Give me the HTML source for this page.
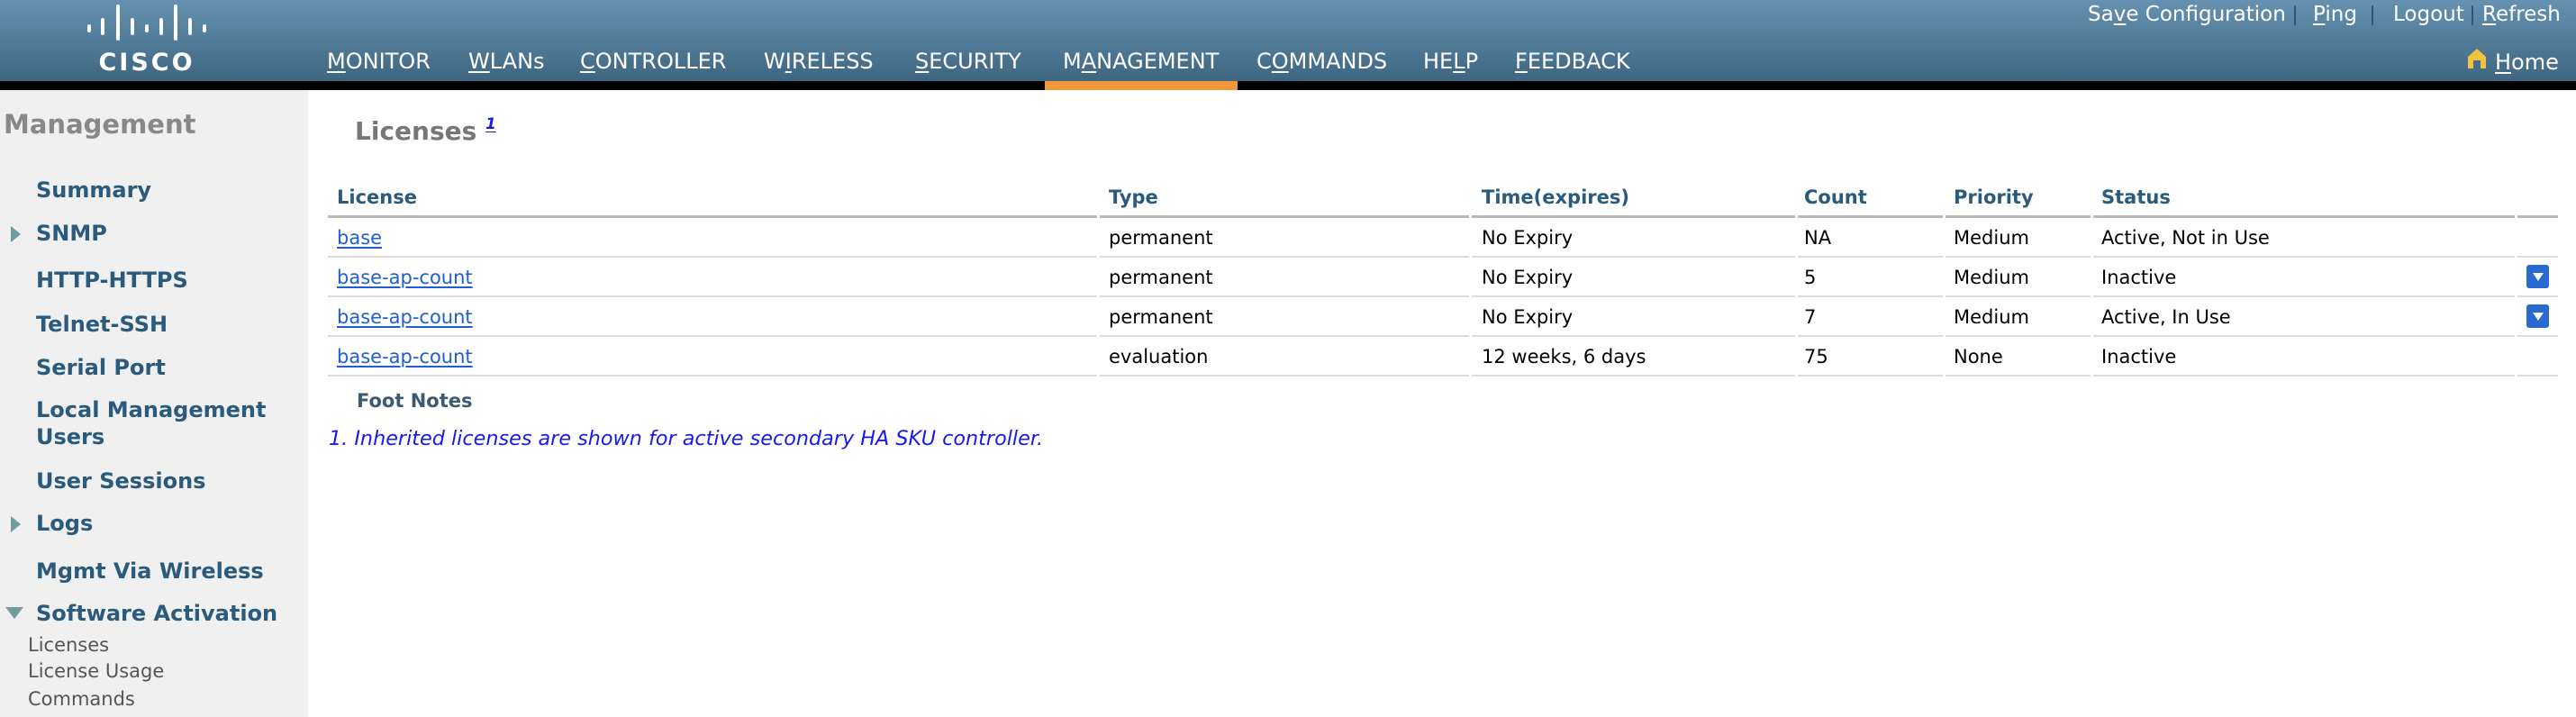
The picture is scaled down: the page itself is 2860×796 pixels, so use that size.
<!DOCTYPE html>
<html><head><meta charset="utf-8"><style>
*{margin:0;padding:0;box-sizing:border-box}
body{width:2860px;height:796px;overflow:hidden;background:#fff;font-family:"DejaVu Sans","Liberation Sans",sans-serif;position:relative}
.hdr{position:absolute;left:0;top:0;width:2860px;height:90px;background:linear-gradient(#6592b0,#3f6681)}
.blk{position:absolute;left:0;top:90px;width:2860px;height:10px;background:#000}
.org{position:absolute;left:1160px;top:90px;width:214px;height:10px;background:#f0983a}
.nav{position:absolute;top:54px;font-size:24px;color:#fff;white-space:nowrap}
.top{position:absolute;top:3px;font-size:23px;color:#fff;white-space:nowrap}
.sep{position:absolute;top:6px;width:2px;height:22px;background:#3a4f80}
u{text-decoration:underline;text-underline-offset:3px}
.side{position:absolute;left:0;top:100px;width:342px;height:696px;background:#f0f0f0}
.si{position:absolute;left:40px;font-size:24px;font-weight:bold;color:#2a5a7c;white-space:nowrap}
.ss{position:absolute;left:31px;font-size:21px;color:#555;white-space:nowrap}
.tri{position:absolute;left:12px;width:0;height:0;border-top:9px solid transparent;border-bottom:9px solid transparent;border-left:11px solid #6f9c9c}
.c{position:absolute;font-size:21px;white-space:nowrap;color:#000}
.h{font-weight:bold;color:#2a5a7c}
a{color:#1f5fd0;text-decoration:underline;text-underline-offset:3px}
.ln{position:absolute;height:2px;background:#dcdcdc}
.hl{position:absolute;height:3px;background:#b8b8b8;top:239px}
.dd{position:absolute;left:2805px;width:25px;height:26px;background:#2a6ad0;border-radius:3px}
.dd:after{content:"";position:absolute;left:7px;top:9px;border-left:6px solid transparent;border-right:6px solid transparent;border-top:9px solid #fff}
</style></head><body>
<div class="hdr"></div>
<svg style="position:absolute;left:0;top:0" width="260" height="90">
<g fill="#fff">
<rect x="97" y="27" width="4" height="9" rx="2"/>
<rect x="112" y="20" width="4" height="19" rx="2"/>
<rect x="129" y="5" width="4" height="40" rx="2"/>
<rect x="145" y="20" width="4" height="19" rx="2"/>
<rect x="161" y="27" width="4" height="9" rx="2"/>
<rect x="177" y="20" width="4" height="19" rx="2"/>
<rect x="193" y="5" width="4" height="40" rx="2"/>
<rect x="209" y="20" width="4" height="19" rx="2"/>
<rect x="225" y="27" width="4" height="9" rx="2"/>
</g>
<text x="163" y="78" text-anchor="middle" fill="#fff" font-family="DejaVu Sans" font-weight="bold" font-size="27" letter-spacing="3">CISCO</text>
</svg>
<div class="blk"></div><div class="org"></div>
<div class="nav" style="left:363px"><u>M</u>ONITOR</div>
<div class="nav" style="left:520px"><u>W</u>LANs</div>
<div class="nav" style="left:644px"><u>C</u>ONTROLLER</div>
<div class="nav" style="left:848px">W<u>I</u>RELESS</div>
<div class="nav" style="left:1016px"><u>S</u>ECURITY</div>
<div class="nav" style="left:1180px">M<u>A</u>NAGEMENT</div>
<div class="nav" style="left:1395px">C<u>O</u>MMANDS</div>
<div class="nav" style="left:1580px">HE<u>L</u>P</div>
<div class="nav" style="left:1682px"><u>F</u>EEDBACK</div>
<div class="top" style="left:2318px">Sa<u>v</u>e Configuration</div>
<div class="sep" style="left:2547px"></div>
<div class="top" style="left:2568px"><u>P</u>ing</div>
<div class="sep" style="left:2633px"></div>
<div class="top" style="left:2657px">Logout</div>
<div class="sep" style="left:2744px"></div>
<div class="top" style="left:2756px"><u>R</u>efresh</div>
<svg style="position:absolute;left:2740px;top:54px" width="20" height="22"><path d="M10 0 L20 9 V22 H14 V13 H6 V22 H0 V9 Z" fill="#f2c140"/></svg>
<div class="nav" style="left:2770px;top:55px"><u>H</u>ome</div>

<div class="side"></div>
<div style="position:absolute;left:4px;top:121px;font-size:29px;font-weight:bold;color:#888">Management</div>
<div class="si" style="top:197px">Summary</div>
<div class="tri" style="top:251px"></div><div class="si" style="top:245px">SNMP</div>
<div class="si" style="top:297px">HTTP-HTTPS</div>
<div class="si" style="top:346px">Telnet-SSH</div>
<div class="si" style="top:394px">Serial Port</div>
<div class="si" style="top:441px">Local Management</div>
<div class="si" style="top:471px">Users</div>
<div class="si" style="top:520px">User Sessions</div>
<div class="tri" style="top:573px"></div><div class="si" style="top:567px">Logs</div>
<div class="si" style="top:620px">Mgmt Via Wireless</div>
<div style="position:absolute;left:6px;top:674px;border-left:10px solid transparent;border-right:10px solid transparent;border-top:13px solid #6f9c9c"></div>
<div class="si" style="top:667px">Software Activation</div>
<div class="ss" style="top:704px">Licenses</div>
<div class="ss" style="top:733px">License Usage</div>
<div class="ss" style="top:764px">Commands</div>

<div style="position:absolute;left:394px;top:128px;font-size:28px;font-weight:bold;color:#777">Licenses <i style="font-size:17px;vertical-align:12px"><a style="color:#1a1ae0">1</a></i></div>

<div class="c h" style="left:374px;top:207px">License</div>
<div class="c h" style="left:1231px;top:207px">Type</div>
<div class="c h" style="left:1645px;top:207px">Time(expires)</div>
<div class="c h" style="left:2003px;top:207px">Count</div>
<div class="c h" style="left:2169px;top:207px">Priority</div>
<div class="c h" style="left:2333px;top:207px">Status</div>
<div class="hl" style="left:364px;width:854px"></div>
<div class="hl" style="left:1221px;width:410px"></div>
<div class="hl" style="left:1634px;width:359px"></div>
<div class="hl" style="left:1996px;width:161px"></div>
<div class="hl" style="left:2160px;width:161px"></div>
<div class="hl" style="left:2324px;width:468px"></div>
<div class="hl" style="left:2795px;width:45px"></div>

<div class="c" style="left:374px;top:252px"><a>base</a></div>
<div class="c" style="left:1231px;top:252px">permanent</div>
<div class="c" style="left:1645px;top:252px">No Expiry</div>
<div class="c" style="left:2003px;top:252px">NA</div>
<div class="c" style="left:2169px;top:252px">Medium</div>
<div class="c" style="left:2333px;top:252px">Active, Not in Use</div>

<div class="c" style="left:374px;top:296px"><a>base-ap-count</a></div>
<div class="c" style="left:1231px;top:296px">permanent</div>
<div class="c" style="left:1645px;top:296px">No Expiry</div>
<div class="c" style="left:2003px;top:296px">5</div>
<div class="c" style="left:2169px;top:296px">Medium</div>
<div class="c" style="left:2333px;top:296px">Inactive</div>
<div class="dd" style="top:294px"></div>

<div class="c" style="left:374px;top:340px"><a>base-ap-count</a></div>
<div class="c" style="left:1231px;top:340px">permanent</div>
<div class="c" style="left:1645px;top:340px">No Expiry</div>
<div class="c" style="left:2003px;top:340px">7</div>
<div class="c" style="left:2169px;top:340px">Medium</div>
<div class="c" style="left:2333px;top:340px">Active, In Use</div>
<div class="dd" style="top:338px"></div>

<div class="c" style="left:374px;top:384px"><a>base-ap-count</a></div>
<div class="c" style="left:1231px;top:384px">evaluation</div>
<div class="c" style="left:1645px;top:384px">12 weeks, 6 days</div>
<div class="c" style="left:2003px;top:384px">75</div>
<div class="c" style="left:2169px;top:384px">None</div>
<div class="c" style="left:2333px;top:384px">Inactive</div>

<div class="ln" style="left:364px;width:854px;top:284px"></div><div class="ln" style="left:1221px;width:410px;top:284px"></div><div class="ln" style="left:1634px;width:359px;top:284px"></div><div class="ln" style="left:1996px;width:161px;top:284px"></div><div class="ln" style="left:2160px;width:161px;top:284px"></div><div class="ln" style="left:2324px;width:468px;top:284px"></div><div class="ln" style="left:2795px;width:45px;top:284px"></div>
<div class="ln" style="left:364px;width:854px;top:328px"></div><div class="ln" style="left:1221px;width:410px;top:328px"></div><div class="ln" style="left:1634px;width:359px;top:328px"></div><div class="ln" style="left:1996px;width:161px;top:328px"></div><div class="ln" style="left:2160px;width:161px;top:328px"></div><div class="ln" style="left:2324px;width:468px;top:328px"></div><div class="ln" style="left:2795px;width:45px;top:328px"></div>
<div class="ln" style="left:364px;width:854px;top:372px"></div><div class="ln" style="left:1221px;width:410px;top:372px"></div><div class="ln" style="left:1634px;width:359px;top:372px"></div><div class="ln" style="left:1996px;width:161px;top:372px"></div><div class="ln" style="left:2160px;width:161px;top:372px"></div><div class="ln" style="left:2324px;width:468px;top:372px"></div><div class="ln" style="left:2795px;width:45px;top:372px"></div>
<div class="ln" style="left:364px;width:854px;top:416px"></div><div class="ln" style="left:1221px;width:410px;top:416px"></div><div class="ln" style="left:1634px;width:359px;top:416px"></div><div class="ln" style="left:1996px;width:161px;top:416px"></div><div class="ln" style="left:2160px;width:161px;top:416px"></div><div class="ln" style="left:2324px;width:468px;top:416px"></div><div class="ln" style="left:2795px;width:45px;top:416px"></div>

<div class="c" style="left:396px;top:433px;font-weight:bold;color:#3c5a70">Foot Notes</div>
<div class="c" style="left:365px;top:474px;font-size:22.3px;font-style:italic;color:#1a1ae8">1. Inherited licenses are shown for active secondary HA SKU controller.</div>
</body></html>
